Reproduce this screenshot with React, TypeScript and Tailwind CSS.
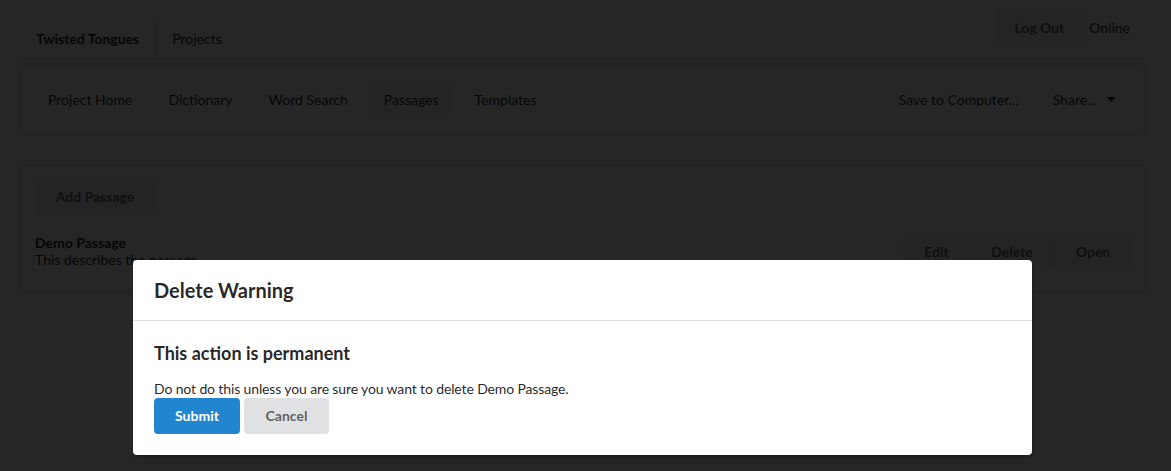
import React from 'react';

const navItems = ['Project Home', 'Dictionary', 'Word Search', 'Passages', 'Templates'];

const App: React.FC = () => {
  const active = 'Passages';

  return (
    <div className="relative h-[471px] w-full overflow-hidden bg-white font-['Lato','Liberation_Sans',sans-serif] text-[14px] text-black/[0.87]">
      {/* top menu */}
      <div className="ml-[20px] mr-[25px] flex h-[59px] border-b border-[#d4d4d5]">
        <div className="flex h-[38px] self-end pb-[2px]">
          <div className="flex items-center border-r border-[#d4d4d5] px-[16px] font-bold">Twisted Tongues</div>
          <div className="flex items-center px-[16px]">Projects</div>
        </div>
        <div className="ml-auto flex items-start gap-[5px] pr-[16px] pt-[10px]">
          <button className="h-[35px] w-[90px] rounded-[4px] bg-[#eef2f0] pb-[1px] font-bold text-black/60">Log Out</button>
          <span className="leading-[35px]">Online</span>
        </div>
      </div>

      {/* secondary menu */}
      <div className="ml-[20px] mr-[25px] mt-[6px] flex h-[70px] items-start rounded-[4px] border border-[#d4d4d5] pl-[15px] pr-[16px] pt-[16px]">
        <div className="flex gap-[12px]">
          {navItems.map(item => (
            <div
              key={item}
              className={`flex h-[34px] items-center rounded-[4px] px-[12px] ${item === active ? 'bg-black/5' : ''}`}
            >
              {item}
            </div>
          ))}
        </div>
        <div className="ml-auto flex gap-[10px]">
          <div className="flex h-[34px] items-center px-[12px]">Save to Computer...</div>
          <div className="flex h-[34px] items-center pl-[12px] pr-[13px]">
            Share...
            <svg className="ml-[10px]" width="9" height="5" viewBox="0 0 9 5">
              <path d="M0 0h9L4.5 5z" fill="currentColor" />
            </svg>
          </div>
        </div>
      </div>

      {/* passages segment */}
      <div className="ml-[20px] mr-[25px] mt-[30px] rounded-[4px] border border-[#d4d4d5] px-[14px] pb-[14px] pt-[13px]">
        <button className="h-[35px] w-[120px] rounded-[4px] bg-[#eef2f0] pb-[1px] font-bold text-black/60">Add Passage</button>
        <div className="mt-[20px] flex h-[44px] items-start justify-between">
          <div>
            <div className="font-bold leading-[17px]">Demo Passage</div>
            <div className="leading-[17px]">This describes the passage</div>
          </div>
          <div className="flex h-[35px] overflow-hidden rounded-[4px] bg-[#eef2f0] pb-[1px] font-bold text-black/60">
            <button className="w-[67px]">Edit</button>
            <button className="w-[84px]">Delete</button>
            <button className="w-[77px] border-l border-black/5">Open</button>
          </div>
        </div>
      </div>

      {/* dimmer */}
      <div className="absolute inset-0 z-10 bg-black/85" />

      {/* modal */}
      <div className="absolute left-[133px] top-[260px] z-20 w-[899px] rounded-[4px] bg-white shadow-[1px_3px_3px_0_rgba(0,0,0,0.2)]">
        <div className="border-b border-[rgba(34,36,38,0.15)] px-[21px] pb-[17px] pt-[18px] text-[20px] font-bold leading-[25px] text-black/85">
          Delete Warning
        </div>
        <div className="px-[21px] pb-[21px] pt-[21px]">
          <div className="text-[18px] font-bold leading-[23px] text-black/[0.87]">This action is permanent</div>
          <p className="mt-[14px] leading-[19px] tracking-[-0.13px]">Do not do this unless you are sure you want to delete Demo Passage.</p>
          <div className="flex gap-[4px]">
            <button className="h-[36px] w-[86px] rounded-[4px] bg-[#2185d0] pb-[1px] font-bold text-white">Submit</button>
            <button className="h-[36px] w-[85px] rounded-[4px] bg-[#e0e1e2] pb-[1px] font-bold text-black/60">Cancel</button>
          </div>
        </div>
      </div>
    </div>
  );
};

export default App;
